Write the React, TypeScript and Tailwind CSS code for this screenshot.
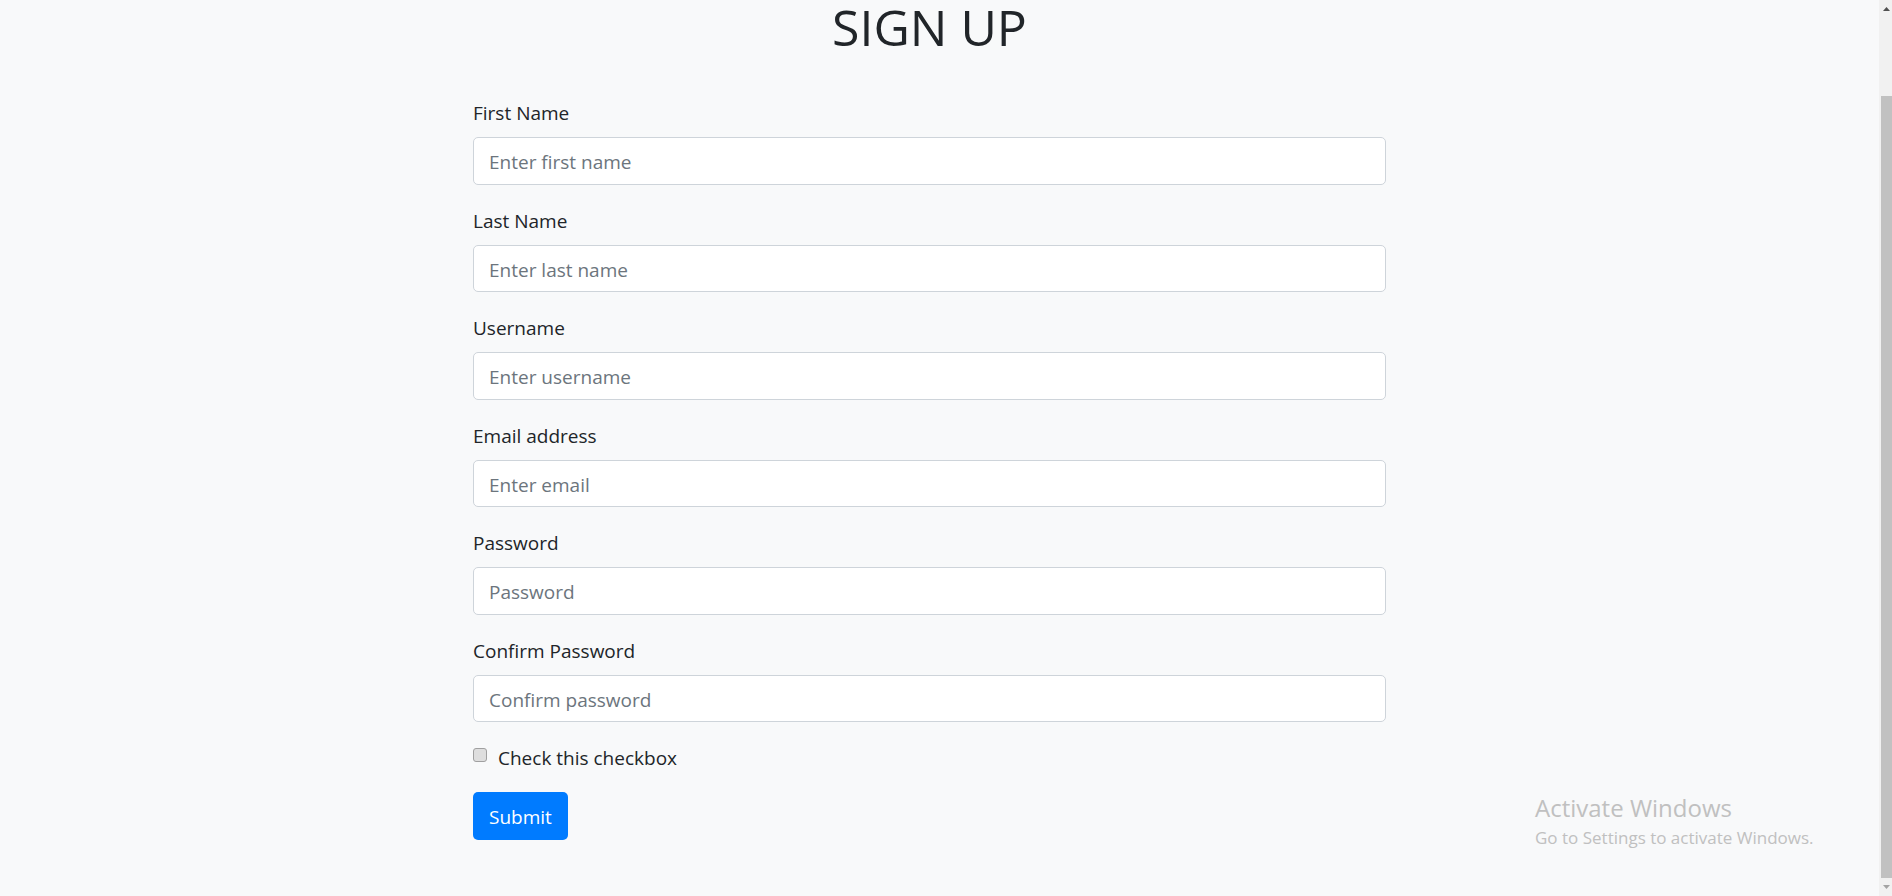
import { useState } from "react"

const fields = [
  { label: "First Name", placeholder: "Enter first name", type: "text" },
  { label: "Last Name", placeholder: "Enter last name", type: "text" },
  { label: "Username", placeholder: "Enter username", type: "text" },
  { label: "Email address", placeholder: "Enter email", type: "email" },
  { label: "Password", placeholder: "Password", type: "password" },
  { label: "Confirm Password", placeholder: "Confirm password", type: "password" },
]

function Scrollbar() {
  return (
    <div className="w-[13px] h-full bg-[#f1f1f1] flex flex-col items-end">
      <div className="w-[11px] h-[17px] flex items-center justify-center">
        <svg width="7" height="4" viewBox="0 0 7 4">
          <path d="M0 4 L3.5 0 L7 4 Z" fill="#505050" />
        </svg>
      </div>
      <div className="w-[11px] mt-[79px] h-[782px] bg-[#c1c1c1]" />
      <div className="w-[11px] flex-1 flex items-center justify-center">
        <svg width="7" height="4" viewBox="0 0 7 4">
          <path d="M0 0 L7 0 L3.5 4 Z" fill="#a3a3a3" />
        </svg>
      </div>
    </div>
  )
}

export default function App() {
  const [checked, setChecked] = useState(false)

  return (
    <div
      className="relative flex h-[896px] w-full overflow-hidden bg-[#f8f9fa] text-[#212529]"
      style={{ fontFamily: '"Open Sans", "Noto Sans", sans-serif' }}
    >
      <main className="flex-1 pl-[473px]">
        <div className="w-[913px]">
          <h1 className="pt-[2px] text-center text-[50px] leading-[50px] font-normal">SIGN UP</h1>

          <form className="mt-[45px]" onSubmit={(e) => e.preventDefault()}>
            {fields.map((f) => (
              <div key={f.label} className="mb-[20px]">
                <label className="mb-[9px] block pt-[1px] text-[19px] leading-[30px]">{f.label}</label>
                <input
                  type={f.type}
                  placeholder={f.placeholder}
                  className="block h-[47.5px] w-full rounded-[5px] border border-[#ced4da] bg-white px-[15px] pt-[3px] text-[19px] text-[#495057] outline-none placeholder:text-[#6c757d]"
                />
              </div>
            ))}

            <label className="mb-[19px] flex h-[31px] items-center text-[19px] leading-[30px]">
              <input
                type="checkbox"
                checked={checked}
                onChange={(e) => setChecked(e.target.checked)}
                className="sr-only"
              />
              <span className="mb-[6px] h-[14px] w-[14px] rounded-[3px] border border-[#a0a0a0] bg-[#dedede]" />
              <span className="ml-[11px] pt-[1px]">Check this checkbox</span>
            </label>

            <button
              type="submit"
              className="h-[47.5px] rounded-[5px] bg-[#007bff] px-[16px] pt-[3px] text-[19px] leading-[30px] text-white"
            >
              Submit
            </button>
          </form>
        </div>
      </main>

      <Scrollbar />

      <div className="absolute left-[1535px] top-[792px] text-[#c0c0c0]">
        <div className="text-[24px] leading-[32px]">Activate Windows</div>
        <div className="text-[17px] leading-[27px]">Go to Settings to activate Windows.</div>
      </div>
    </div>
  )
}
